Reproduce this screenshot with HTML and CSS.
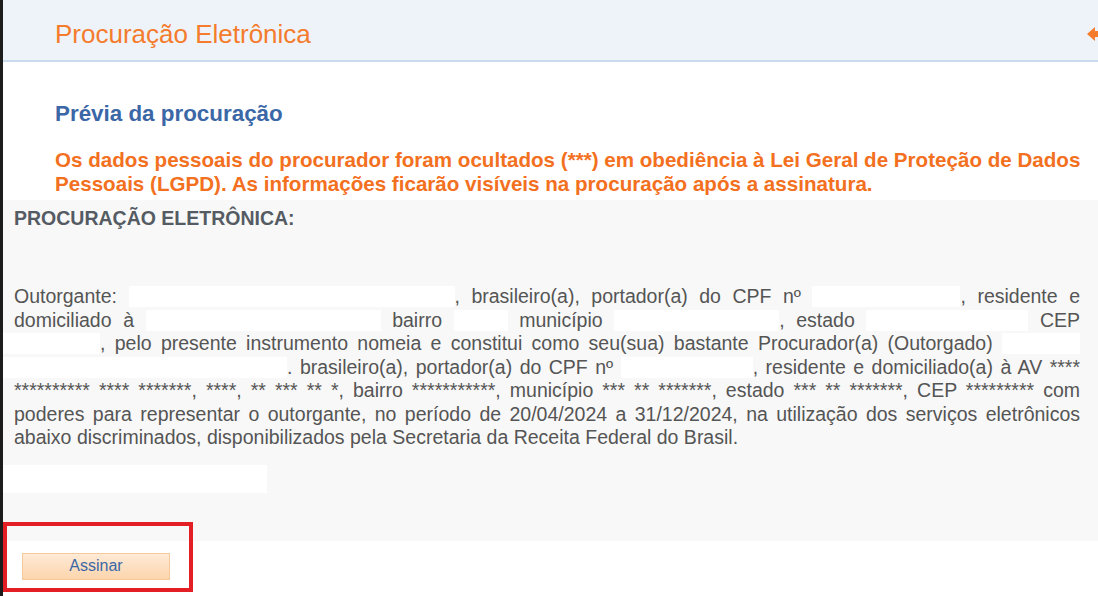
FILE: index.html
```html
<!DOCTYPE html>
<html lang="pt-BR">
<head>
<meta charset="utf-8">
<title>Procuração Eletrônica</title>
<link rel="stylesheet" href="styles.css">
</head>
<body>
<div class="page">
  <header class="topbar">
    <h1 class="title">Procuração Eletrônica</h1>
    <svg class="back" width="22" height="16" viewBox="0 0 22 16" aria-hidden="true">
      <path d="M0 8 L8 1 L8 5 L18 5 L18 11 L8 11 L8 15 Z" fill="#f47c2c"/>
    </svg>
  </header>

  <section class="intro">
    <h2 class="subtitle">Prévia da procuração</h2>
    <p class="warning">Os dados pessoais do procurador foram ocultados (***) em obediência à Lei Geral de Proteção de Dados Pessoais (LGPD). As informações ficarão visíveis na procuração após a assinatura.</p>
  </section>

  <section class="doc">
    <h3 class="doc-title">PROCURAÇÃO ELETRÔNICA:</h3>
    <div class="doc-text">
      <div class="ln">Outorgante: <span class="rd w1a"></span>, brasileiro(a), portador(a) do CPF nº <span class="rd w1b"></span>, residente e</div>
      <div class="ln">domiciliado à <span class="rd w2a"></span> bairro <span class="rd w2b"></span> município <span class="rd w2c"></span>, estado <span class="rd w2d"></span> CEP</div>
      <div class="ln"><span class="rd w3a"></span>, pelo presente instrumento nomeia e constitui como seu(sua) bastante Procurador(a) (Outorgado) <span class="rd w3b"></span></div>
      <div class="ln"><span class="rd w4a"></span>. brasileiro(a), portador(a) do CPF nº <span class="rd w4b"></span>, residente e domiciliado(a) à AV ****</div>
      <div class="ln">********** **** *******, ****, ** *** ** *, bairro ***********, município *** ** *******, estado *** ** *******, CEP ********* com</div>
      <div class="ln">poderes para representar o outorgante, no período de 20/04/2024 a 31/12/2024, na utilização dos serviços eletrônicos</div>
      <div class="ln last">abaixo discriminados, disponibilizados pela Secretaria da Receita Federal do Brasil.</div>
    </div>
    <div class="signature-blank"></div>
  </section>

  <div class="actions">
    <button class="btn" type="button">Assinar</button>
    <div class="highlight"></div>
  </div>
</div>
</body>
</html>
```

FILE: styles.css
```css
html, body {
  margin: 0;
  padding: 0;
  background: #ffffff;
}

body {
  font-family: "Liberation Sans", Arial, sans-serif;
  border-left: 3px solid #1c1c1c;
  min-height: 596px;
  box-sizing: border-box;
  overflow: hidden;
}

.page {
  position: relative;
}

.topbar {
  height: 60px;
  background: #eef3f9;
  border-bottom: 2px solid #c9dcef;
  display: flex;
  align-items: center;
  justify-content: space-between;
  padding-left: 52px;
  overflow: hidden;
}

.title {
  margin: 0;
  font-weight: normal;
  font-size: 26px;
  line-height: 30px;
  color: #f47c2c;
  padding-top: 8px;
}

.back {
  margin-right: -11px;
  margin-top: 8px;
}

.intro {
  padding: 40px 8px 0 52px;
}

.subtitle {
  margin: 0;
  font-size: 22.4px;
  font-weight: bold;
  color: #3b67a6;
  line-height: 24px;
}

.warning {
  margin: 22px 0 0 0;
  font-size: 20.6px;
  font-weight: bold;
  color: #f37021;
  line-height: 24px;
}

.doc {
  background: #f8f8f8;
  margin-top: 4px;
  padding: 8px 18px 48px 11px;
}

.doc-title {
  margin: 0;
  font-size: 19.5px;
  font-weight: bold;
  color: #555b63;
  line-height: 20px;
}

.doc-text {
  margin-top: 57px;
  font-size: 19.5px;
  color: #555555;
  line-height: 23.5px;
}

.ln {
  text-align: justify;
  text-align-last: justify;
  white-space: nowrap;
}

.ln.last {
  text-align-last: left;
}

.rd {
  display: inline-block;
  height: 21px;
  background: #ffffff;
  vertical-align: -4px;
}

.w1a { width: 326px; }
.w1b { width: 148px; }
.w2a { width: 235px; }
.w2b { width: 54px; }
.w2c { width: 165px; }
.w2d { width: 162px; }
.w3a { width: 86px; margin-left: -11px; padding-left: 11px; }
.w3b { width: 78px; }
.w4a { width: 273px; margin-left: -11px; padding-left: 11px; }
.w4b { width: 132px; }

.signature-blank {
  margin: 15px 0 0 -11px;
  width: 264px;
  height: 28px;
  background: #ffffff;
}

.actions {
  position: relative;
  padding: 12px 0 16px 19px;
}

.btn {
  width: 148px;
  height: 27px;
  font-family: "Liberation Sans", Arial, sans-serif;
  font-size: 16px;
  color: #3b67a6;
  background: linear-gradient(#feead6, #fcd5ad);
  border: 1px solid #f6c99b;
  border-radius: 0;
  padding: 0;
}

.highlight {
  position: absolute;
  left: 0;
  top: -19px;
  width: 182px;
  height: 62px;
  border: 4px solid #e41e25;
}
```
